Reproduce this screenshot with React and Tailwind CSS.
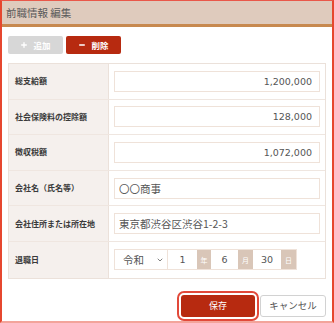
import { ChevronDown, Plus, Minus } from 'lucide-react'

const FONT = { fontFamily: '"DejaVu Sans", "Noto Sans CJK JP", sans-serif' }
const JP = { fontFamily: '"Noto Sans CJK JP", sans-serif' }

const ROWS = [
  { label: '総支給額', value: '1,200,000', num: true },
  { label: '社会保険料の控除額', value: '128,000', num: true },
  { label: '徴収税額', value: '1,072,000', num: true },
  { label: '会社名（氏名等）', value: '〇〇商事' },
  { label: '会社住所または所在地', value: '東京都渋谷区渋谷1-2-3' },
]

function Row({ label, children, last }) {
  return (
    <div className={`grid grid-cols-[100px_1fr] h-[35.6px] ${last ? '' : 'border-b border-[#efe6e0]'}`}>
      <div className="bg-[#f5f0ed] border-r border-[#ebe1da] flex items-center pl-[6px] text-[8px] font-bold text-[#3a3a3a] whitespace-nowrap" style={JP}>
        {label}
      </div>
      <div className="flex items-center px-[5px]">{children}</div>
    </div>
  )
}

function Addon({ children }) {
  return (
    <span className="h-full flex items-center justify-center bg-[#d9c6b8] text-white text-[7px]" style={JP}>
      {children}
    </span>
  )
}

export default function App() {
  return (
    <div className="w-[334px] h-[323px] flex flex-col bg-white border-t border-x-2 border-b-2 border-t-[#e9584a] border-x-[#e6472f] border-b-[#f3a49b] overflow-hidden" style={FONT}>
      <div className="h-[26px] shrink-0 bg-[#dfcbbd] border-b-[3px] border-[#c7894f] flex items-center pl-[4px] text-[10.5px] text-[#5a5a5a]" style={JP}>
        前職情報 編集
      </div>

      <div className="px-[6px] pt-[9px] flex flex-col flex-1">
        <div className="flex gap-[3px] h-[18px]">
          <button className="w-[55px] h-full rounded-[2px] bg-[#d7d7d7] text-white flex items-center justify-center gap-[5px] text-[8.5px] font-bold" style={JP}>
            <Plus size={8} strokeWidth={4} />
            追加
          </button>
          <button className="w-[55px] h-full rounded-[2px] bg-[#b72a10] text-white flex items-center justify-center gap-[5px] text-[8.5px] font-bold" style={JP}>
            <Minus size={8} strokeWidth={4} />
            削除
          </button>
        </div>

        <div className="mt-[9px] border border-[#ebe1da]">
          {ROWS.map(r => (
            <Row key={r.label} label={r.label}>
              <input
                readOnly
                value={r.value}
                style={r.num ? undefined : JP}
                className={`w-full h-[21px] border border-[#efe2d9] text-[#555] outline-none ${r.num ? 'text-right pr-[7px] text-[9.5px]' : 'text-left pl-[4px] text-[10.5px]'}`}
              />
            </Row>
          ))}
          <Row label="退職日" last>
            <div className="flex h-[21px] border border-[#efe2d9] text-[9.5px] text-[#555]">
              <div className="w-[53px] flex items-center justify-between pl-[8px] pr-[3px] border-r border-[#efe2d9]">
                <span className="text-[10.5px]" style={JP}>令和</span>
                <ChevronDown size={8} strokeWidth={2.5} className="text-[#666]" />
              </div>
              <input readOnly value="1" className="w-[29px] text-center outline-none" />
              <span className="w-[14px]"><Addon>年</Addon></span>
              <input readOnly value="6" className="w-[27px] text-center outline-none" />
              <span className="w-[15px]"><Addon>月</Addon></span>
              <input readOnly value="30" className="w-[28px] text-center outline-none" />
              <span className="w-[15px]"><Addon>日</Addon></span>
            </div>
          </Row>
        </div>

        <div className="mt-[16px] flex justify-end gap-[5px]" style={JP}>
          <button className="w-[74px] h-[22px] rounded-[3px] bg-[#b72a10] text-white text-[9px] outline-2 outline-offset-[2px] outline-[#e2493a]">
            保存
          </button>
          <button className="w-[66px] h-[22px] rounded-[3px] bg-white border border-[#d2d2d2] text-[#555] text-[9.5px]">
            キャンセル
          </button>
        </div>
      </div>
    </div>
  )
}
